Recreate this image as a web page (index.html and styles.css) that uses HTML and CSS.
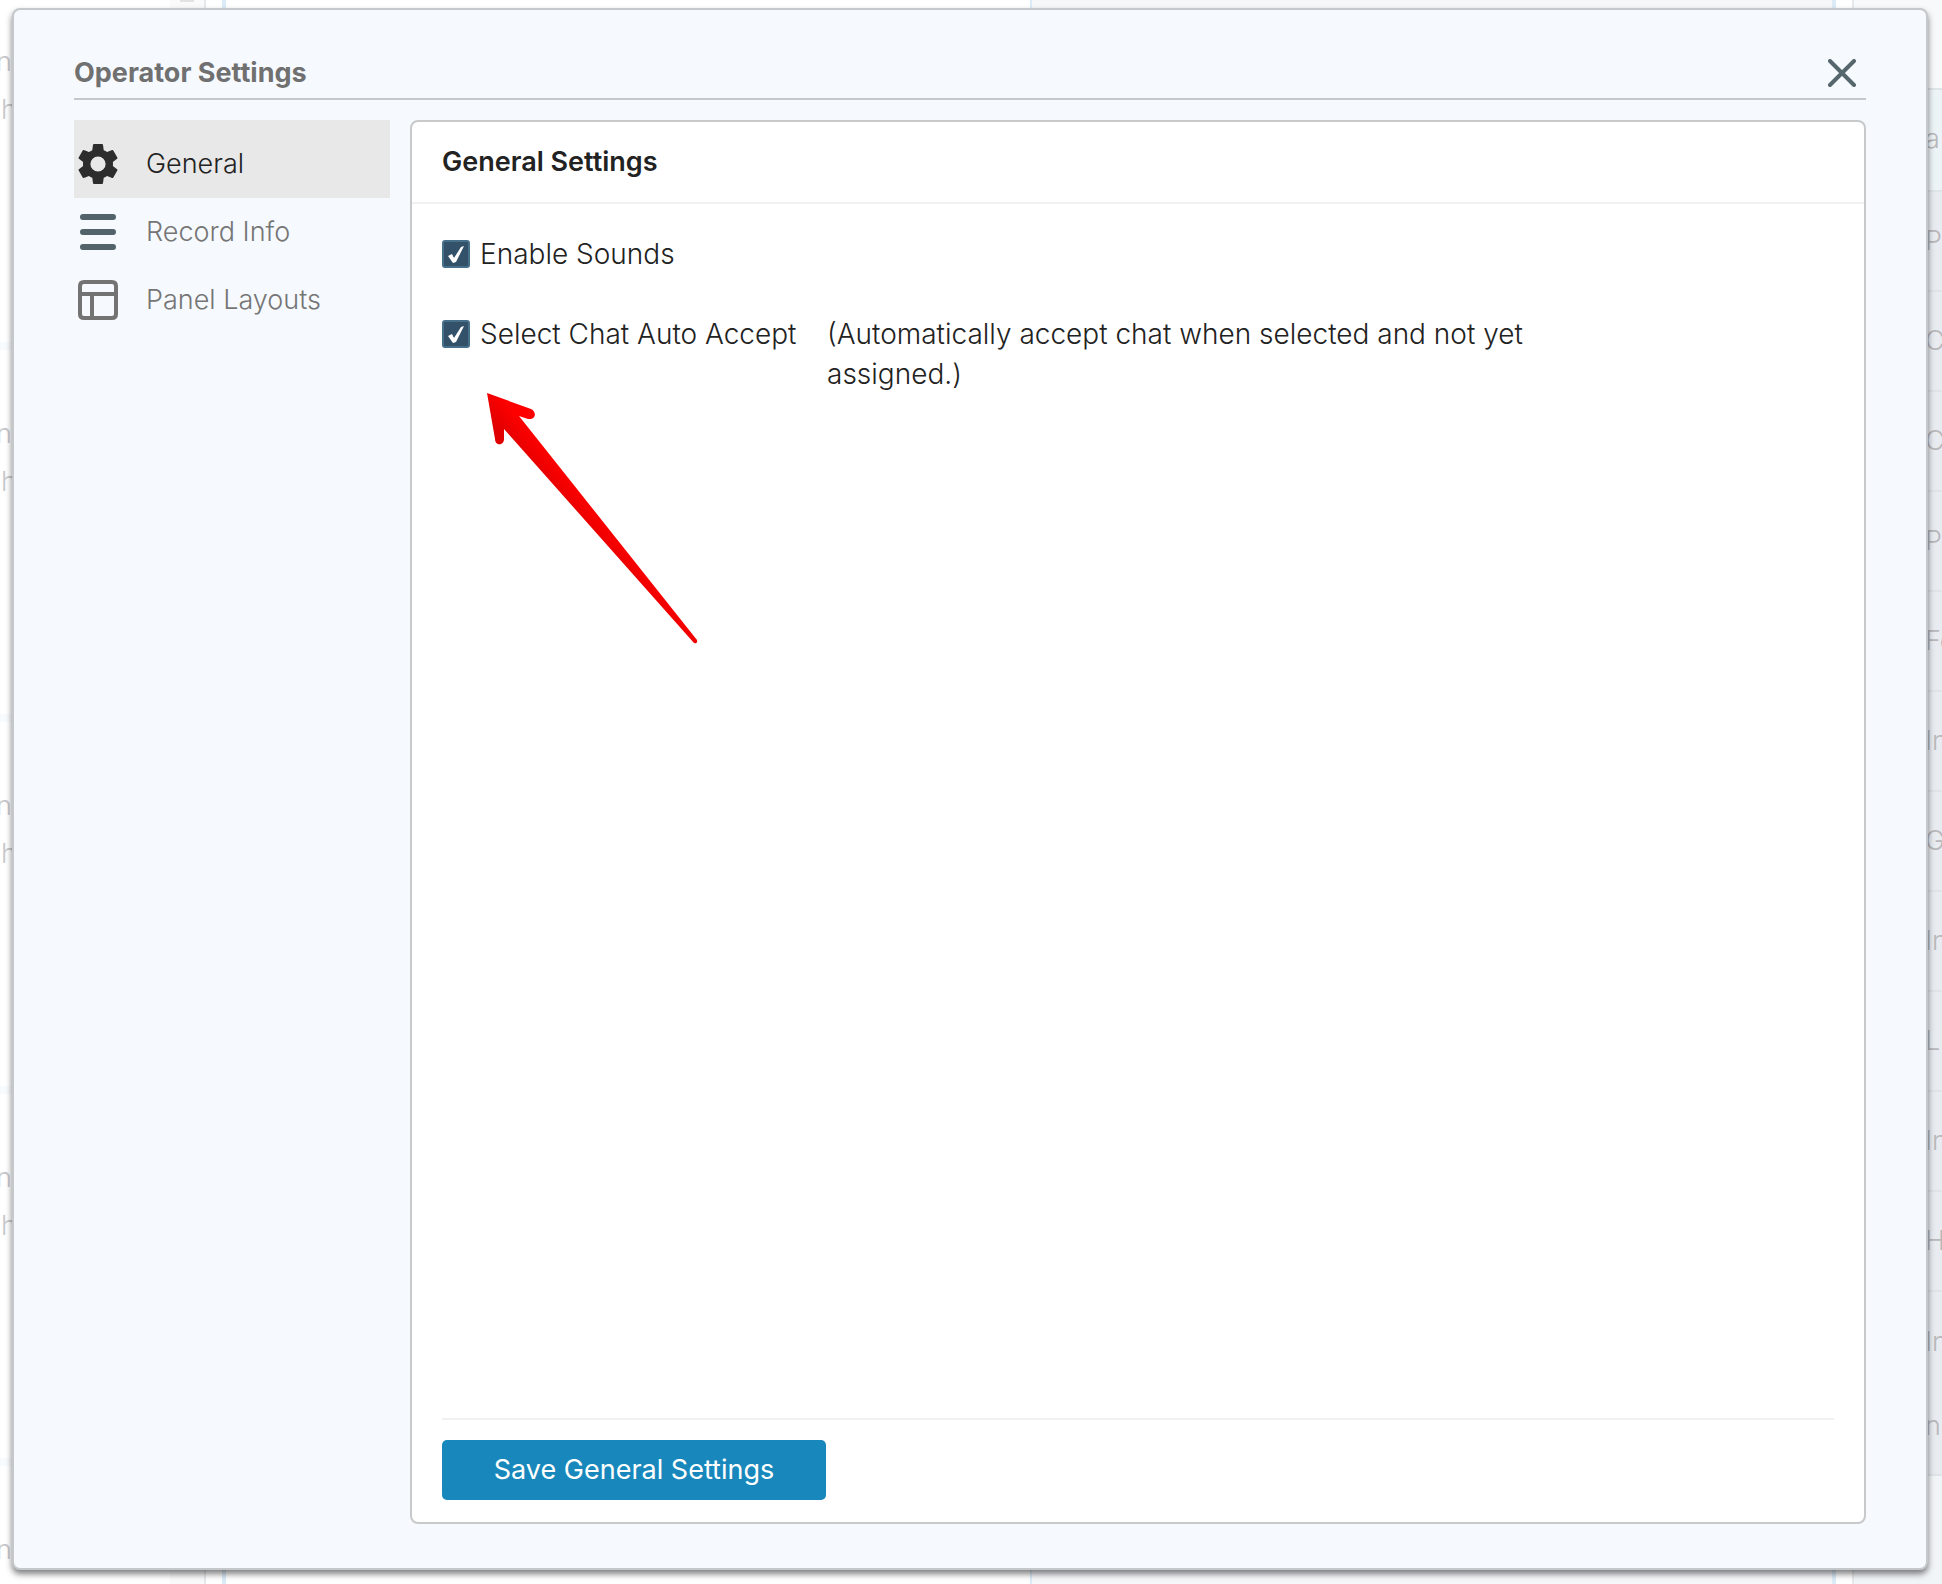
FILE: index.html
```html
<!DOCTYPE html>
<html lang="en">
<head>
<meta charset="utf-8">
<meta name="viewport" content="width=device-width, initial-scale=1">
<title>Operator Settings</title>
<link rel="stylesheet" href="styles.css">
</head>
<body>
<div class="app" aria-hidden="true">
  <div class="chats">
    <div class="chat"><p class="chat-name">n</p><p class="chat-text">h</p></div>
    <div class="chat"><p class="chat-name">n</p><p class="chat-text">h</p></div>
    <div class="chat"><p class="chat-name">n</p><p class="chat-text">h</p></div>
    <div class="chat"><p class="chat-name">n</p><p class="chat-text">h</p></div>
    <div class="chat"><p class="chat-name">n</p></div>
  </div>
  <div class="scroll-track"><span class="scroll-arrow"></span></div>
  <div class="conversation"></div>
  <div class="details"></div>
  <div class="record">
    <p class="field field-current">a</p>
    <p class="field">P</p>
    <p class="field">C</p>
    <p class="field">C</p>
    <p class="field">P</p>
    <p class="field">Fe</p>
    <p class="field">In</p>
    <p class="field">G</p>
    <p class="field">In</p>
    <p class="field">Li</p>
    <p class="field">In</p>
    <p class="field">H</p>
    <p class="field field-tall">In<br>no</p>
  </div>
</div>

<main class="modal" role="dialog" aria-labelledby="modal-title">
  <header class="modal-header">
    <h1 class="modal-title" id="modal-title">Operator Settings</h1>
    <button class="close" type="button" aria-label="Close">
      <svg width="28" height="28" viewBox="0 0 28 28"><path d="M2 2 26 26M26 2 2 26" fill="none" stroke="#55666c" stroke-width="4" stroke-linecap="round"/></svg>
    </button>
  </header>
  <div class="modal-body">
    <nav class="nav">
      <a class="nav-item nav-item-active" href="#general">
        <svg class="nav-icon" viewBox="2 2 20 20"><path fill="#2d2d2e" d="M19.43 12.98c.04-.32.07-.64.07-.98s-.03-.66-.07-.98l2.11-1.65c.19-.15.24-.42.12-.64l-2-3.46c-.12-.22-.39-.3-.61-.22l-2.49 1c-.52-.4-1.08-.73-1.69-.98l-.38-2.65A.49.49 0 0 0 14 2h-4c-.25 0-.46.18-.49.42l-.38 2.65c-.61.25-1.17.59-1.69.98l-2.49-1c-.23-.09-.49 0-.61.22l-2 3.46c-.13.22-.07.49.12.64l2.11 1.65c-.04.32-.07.65-.07.98s.03.66.07.98l-2.11 1.65c-.19.15-.24.42-.12.64l2 3.46c.12.22.39.3.61.22l2.49-1c.52.4 1.08.73 1.69.98l.38 2.65c.03.24.24.42.49.42h4c.25 0 .46-.18.49-.42l.38-2.65c.61-.25 1.17-.59 1.69-.98l2.49 1c.23.09.49 0 .61-.22l2-3.46c.12-.22.07-.49-.12-.64l-2.11-1.65zM12 15.800a3.800 3.800 0 1 1 0-7.600 3.800 3.800 0 0 1 0 7.600z"/></svg>
        <span>General</span>
      </a>
      <a class="nav-item" href="#record-info">
        <svg class="nav-icon" viewBox="0 0 40 40"><path d="M5 5H35M5 20H35M5 35H35" fill="none" stroke="#52636a" stroke-width="6" stroke-linecap="round"/></svg>
        <span>Record Info</span>
      </a>
      <a class="nav-item" href="#panel-layouts">
        <svg class="nav-icon" viewBox="0 0 40 40"><path d="M6 2H34Q38 2 38 6V34Q38 38 34 38H6Q2 38 2 34V6Q2 2 6 2ZM2 14H38M14 14V38" fill="none" stroke="#737373" stroke-width="4"/></svg>
        <span>Panel Layouts</span>
      </a>
    </nav>
    <form class="panel" id="general">
      <h2 class="panel-title">General Settings</h2>
      <div class="panel-content">
        <div class="option">
          <label class="check-label"><input class="check" type="checkbox" checked>Enable Sounds</label>
        </div>
        <div class="option">
          <label class="check-label"><input class="check" type="checkbox" checked aria-describedby="auto-accept-note">Select Chat Auto Accept</label>
          <p class="note" id="auto-accept-note">(Automatically accept chat when selected and not yet assigned.)</p>
        </div>
        <svg class="pointer" width="216" height="256" viewBox="0 0 216 256" aria-hidden="true">
          <defs><linearGradient id="red" x1="0" y1="1" x2="1" y2="0"><stop offset=".45" stop-color="#e00000"/><stop offset=".53" stop-color="#ff0000"/></linearGradient></defs>
          <path fill="url(#red)" d="M2 2 46 18C52 21 51 29 43 28L34 25 212 249Q213 253 209 252L19 38V48C19 55 10 55 10 48Z"/>
        </svg>
      </div>
      <footer class="panel-footer">
        <button class="save" type="button">Save General Settings</button>
      </footer>
    </form>
  </div>
</main>
</body>
</html>
```
FILE: styles.css
```css
* {
  box-sizing: border-box;
}

body {
  position: relative;
  min-height: 100vh;
  margin: 0;
  overflow: hidden;
  background: #fff;
  color: #222;
  font: 300 27px/40px Inter, sans-serif;
}

h1, h2, p {
  margin: 0;
  font-size: inherit;
}

button {
  border: 0;
  cursor: pointer;
  font: inherit;
}

/* Operator console behind the dialog */
.app {
  position: absolute;
  inset: 0;
  display: grid;
  grid-template-columns: 170px 36px 1fr 806px 106px;
  overflow: hidden;
  color: #b8b8bc;
}

.chats {
  overflow: hidden;
  color: #c8c8cc;
}

.chat {
  height: 372px;
  padding-top: 64px;
  border-bottom: 8px solid #f8fbfe;
}

.chat:first-child {
  height: 350px;
  padding-top: 42px;
}

.chat-name {
  margin-left: -4px;
  padding-bottom: 8px;
}

.chat-text {
  padding-left: 1px;
}

.scroll-track {
  display: flex;
  justify-content: center;
  border-right: 2px solid #e6e9eb;
  background: #fafafa;
}

.scroll-arrow {
  width: 14px;
  height: 2px;
  background: #e2e2e2;
}

.conversation {
  margin-left: 16px;
  border-left: 4px solid #dcebf8;
}

.details {
  border-right: 4px solid #dcebf8;
  border-left: 2px solid #dcebf8;
  background: #f6f7f9;
}

.record {
  margin-left: 16px;
  padding-top: 88px;
  border-left: 2px solid #e6e9eb;
  background: linear-gradient(#f8f9fb 1476px, #f2f5f8 1476px);
}

.field {
  height: 100px;
  padding: 29px 0 0 71px;
  border-bottom: 2px solid #dfe4e9;
  background: #e8ecf1;
  white-space: nowrap;
}

.field-current {
  height: 104px;
  border-top: 2px solid #dfe4e9;
  background: #edf4f7;
}

.field-tall {
  height: 184px;
  padding-top: 8px;
  line-height: 84px;
}

/* Dialog */
.modal {
  position: absolute;
  inset: 8px 14px 14px 12px;
  display: flex;
  flex-direction: column;
  padding: 38px 60px 44px;
  border: 2px solid #c5c8ca;
  border-radius: 8px;
  background: #f6faff;
  box-shadow: 0 4px 6px rgba(0, 0, 0, .5);
}

.modal-header {
  display: flex;
  justify-content: space-between;
  padding: 5px 10px 5px 0;
  border-bottom: 2px solid #c5c8ca;
}

.modal-title {
  color: #707070;
  font-weight: 700;
}

.close {
  display: flex;
  align-items: center;
  padding: 0;
  background: none;
}

.modal-body {
  flex: 1;
  display: flex;
  gap: 20px;
  padding-top: 20px;
}

.nav {
  flex: 0 0 316px;
}

.nav-item {
  display: flex;
  align-items: center;
  gap: 28px;
  height: 68px;
  padding-left: 4px;
  color: #757575;
  text-decoration: none;
}

.nav-item-active {
  height: 78px;
  padding-top: 10px;
  background: #e8e8e8;
  color: #222;
}

.nav-icon {
  width: 40px;
  height: 40px;
}

.panel {
  flex: 1;
  display: flex;
  flex-direction: column;
  border: 2px solid #c8c9ca;
  border-radius: 8px;
  background: #fff;
}

.panel-title {
  padding: 20px 30px;
  border-bottom: 2px solid #f1f1f2;
  font-weight: 600;
}

.panel-content {
  position: relative;
  flex: 1;
  display: flex;
  flex-direction: column;
  gap: 40px;
  padding: 30px;
  font-size: 28px;
}

.option {
  display: flex;
  gap: 30px;
}

.check-label {
  display: flex;
  align-items: center;
  align-self: flex-start;
  gap: 10px;
  min-width: 355px;
  white-space: nowrap;
}

.check {
  width: 28px;
  height: 28px;
  margin: 0;
  appearance: none;
  border: 2px solid #47718a;
  border-radius: 3px;
  background: #34516a;
}

.check:checked::before {
  content: "";
  display: block;
  width: 24px;
  height: 24px;
  background: #fff;
  clip-path: polygon(4px 14px, 8px 12px, 10px 16px, 17px 5px, 20px 4px, 12px 20px, 9px 21px);
}

.note {
  max-width: 760px;
}

.pointer {
  position: absolute;
  top: 187px;
  left: 73px;
}

.panel-footer {
  margin: 0 30px;
  padding: 20px 0 22px;
  border-top: 2px solid #f1f1f2;
}

.save {
  display: block;
  min-width: 384px;
  height: 60px;
  padding: 0 48px;
  border-radius: 5px;
  background: #1888bc;
  color: #fff;
  font-weight: 400;
}
```
